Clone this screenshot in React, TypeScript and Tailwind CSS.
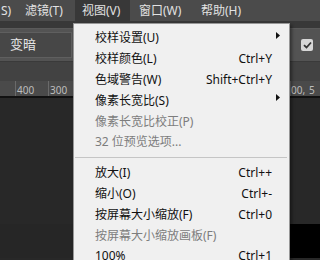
import React from "react";

type Item =
  | { sep: true }
  | { label: string; shortcut?: string; arrow?: boolean; disabled?: boolean; sep?: false };

const items: Item[] = [
  { label: "校样设置(U)", arrow: true },
  { label: "校样颜色(L)", shortcut: "Ctrl+Y" },
  { label: "色域警告(W)", shortcut: "Shift+Ctrl+Y" },
  { label: "像素长宽比(S)", arrow: true },
  { label: "像素长宽比校正(P)", disabled: true },
  { label: "32 位预览选项...", disabled: true },
  { sep: true },
  { label: "放大(I)", shortcut: "Ctrl++" },
  { label: "缩小(O)", shortcut: "Ctrl+-" },
  { label: "按屏幕大小缩放(F)", shortcut: "Ctrl+0" },
  { label: "按屏幕大小缩放画板(F)", disabled: true },
  { label: "100%", shortcut: "Ctrl+1" },
];

const font = { fontFamily: '"Noto Sans", "Noto Sans CJK SC", sans-serif' };

export default function App() {
  return (
    <div
      className="relative w-[320px] h-[260px] overflow-hidden bg-[#282828] text-[12px]"
      style={font}
    >
      {/* Menubar */}
      <div className="flex h-[21px] bg-[#4b4b4b] text-[#e2e2e2] leading-[21px]">
        <div className="w-[17px] pl-[1px]">S)</div>
        <div className="w-[58px] pl-[8px]">滤镜(T)</div>
        <div className="w-[55px] pl-[7px] bg-[#383838]">视图(V)</div>
        <div className="w-[62px] pl-[9px]">窗口(W)</div>
        <div className="pl-[9px]">帮助(H)</div>
      </div>
      {/* dark strip */}
      <div className="h-[8px] bg-[#383838] border-b border-[#5a5a5a]" />
      {/* options bar */}
      <div className="flex items-center h-[32px] bg-[#535353] justify-between">
        <div className="h-[26px] w-[72px] bg-[#474747] border border-[#5f5f5f] border-l-0 flex items-center pl-[10px] text-[#e6e6e6] text-[13px]">
          变暗
        </div>
        <div className="mr-[7px] w-[12px] h-[12px] rounded-[2px] bg-[#d6d6d6] flex items-center justify-center">
          <svg width="9" height="8" viewBox="0 0 9 8">
            <path d="M1 4.2 L3.5 6.5 L8 1.5" stroke="#333" strokeWidth="1.8" fill="none" />
          </svg>
        </div>
      </div>
      {/* tab area */}
      <div className="h-[20px] bg-[#424242] border-t border-[#3a3a3a]" />
      {/* ruler */}
      <div className="relative h-[17px] bg-[#4a4a4a] border-b-2 border-[#111] text-[#bdbdbd] text-[10px] leading-[17px]">
        <div className="absolute left-[15px] top-0 h-full w-px bg-[#6a6a6a]" />
        <span className="absolute left-[17px] top-[1px]">400</span>
        <div className="absolute left-[48px] top-0 h-full w-px bg-[#6a6a6a]" />
        <span className="absolute left-[50px] top-[1px]">300</span>
        <div className="absolute left-[290px] top-0 h-full w-px bg-[#6a6a6a]" />
        <span className="absolute left-[291px] top-[1px]">00,</span>
        <span className="absolute left-[309px] top-[1px]">5</span>
      </div>
      {/* canvas */}
      <div className="flex flex-col h-[160px]">
        <div className="h-[126px] bg-[#282828]" />
        <div className="flex-1 bg-[#262626] flex">
          <div className="w-[290px] bg-[#262626]" />
          <div className="flex-1 bg-black" />
        </div>
      </div>

      {/* Dropdown menu */}
      <div className="absolute left-[73px] top-[23px] w-[217px] h-[250px] bg-[#f0f0f0] border border-[#979797] pt-[4px] shadow-[2px_2px_3px_rgba(0,0,0,0.4)]">
        {items.map((it, i) =>
          it.sep ? (
            <div key={i} className="h-[10px] flex items-center pl-[1px] pr-[2px]">
              <div className="h-px w-full bg-[#c5c5c5]" />
            </div>
          ) : (
            <div
              key={i}
              className={`relative flex items-center h-[20.8px] pl-[21px] pr-[17px] ${
                it.disabled ? "text-[#7d7d7d]" : "text-[#111]"
              }`}
            >
              <span className="flex-1 whitespace-nowrap">{it.label}</span>
              {it.shortcut && <span className="whitespace-nowrap">{it.shortcut}</span>}
              {it.arrow && (
                <svg
                  className="absolute right-[9px] top-[4px]"
                  width="4"
                  height="7"
                  viewBox="0 0 4 7"
                >
                  <path d="M0 0 L4 3.5 L0 7 Z" fill="#111" />
                </svg>
              )}
            </div>
          )
        )}
      </div>
    </div>
  );
}
